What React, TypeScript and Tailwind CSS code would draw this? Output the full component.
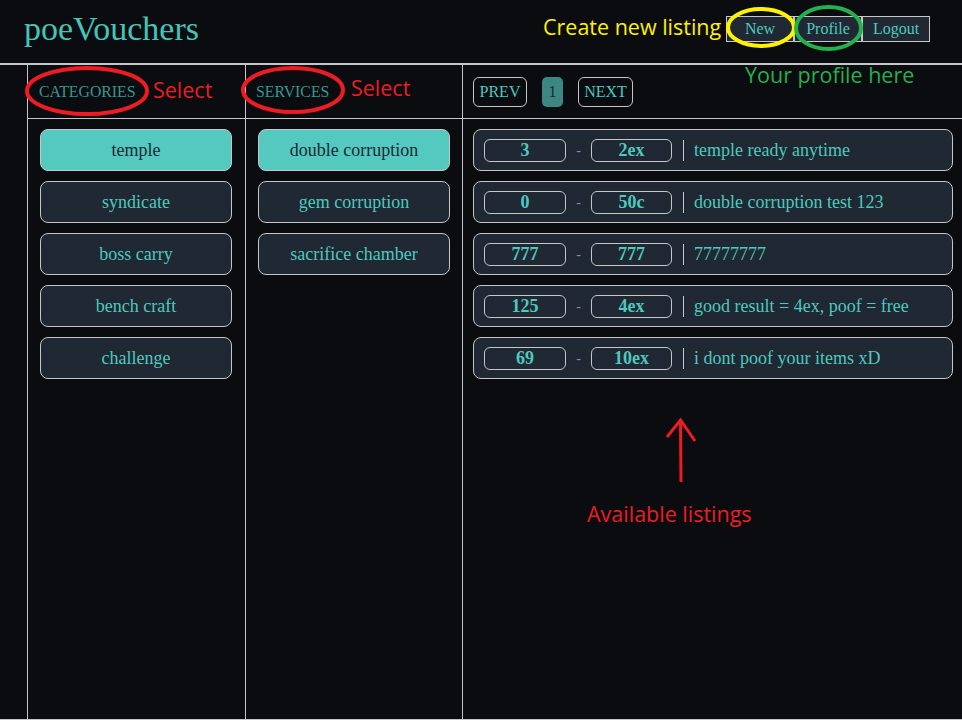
import { useState } from "react"

const CATEGORIES = ["temple", "syndicate", "boss carry", "bench craft", "challenge"]
const SERVICES = ["double corruption", "gem corruption", "sacrifice chamber"]

const LISTINGS = [
  { min: "3", max: "2ex", text: "temple ready anytime" },
  { min: "0", max: "50c", text: "double corruption test 123" },
  { min: "777", max: "777", text: "77777777" },
  { min: "125", max: "4ex", text: "good result = 4ex, poof = free" },
  { min: "69", max: "10ex", text: "i dont poof your items xD" },
]

const serif = "font-['Liberation_Serif',_'Times_New_Roman',_serif]"

function PickButton({ label, active, onClick }: { label: string; active: boolean; onClick: () => void }) {
  return (
    <button
      onClick={onClick}
      className={
        "w-[192px] h-[42px] rounded-[8px] border border-[#c5c6c7] text-[18px] " +
        (active ? "bg-[#53c9bf] text-[#1f2833]" : "bg-[#1f2833] text-[#4fc8bd]")
      }
    >
      {label}
    </button>
  )
}

// annotations drawn on top of the screenshot (paint marks)
function Annotations() {
  return (
    <div className="pointer-events-none absolute inset-0 font-['Open_Sans',_sans-serif]">
      <svg width="962" height="720" className="absolute inset-0">
        <ellipse cx="87" cy="91" rx="60" ry="23" fill="none" stroke="#ed1c24" strokeWidth="4" />
        <ellipse cx="293" cy="90" rx="50" ry="22" fill="none" stroke="#ed1c24" strokeWidth="4" />
        <ellipse cx="761" cy="27.5" rx="33" ry="18.5" fill="none" stroke="#fff200" strokeWidth="4" />
        <ellipse cx="828.5" cy="28" rx="32.5" ry="21" fill="none" stroke="#22b14c" strokeWidth="4" />
        <path d="M681 482 L680.5 420 M667 437 L680.5 420 L695 441" fill="none" stroke="#ed1c24" strokeWidth="3" />
      </svg>
      <span className="absolute left-[153px] top-[79px] text-[21.5px] leading-none text-[#ed1c24]">Select</span>
      <span className="absolute left-[351px] top-[77px] text-[21.5px] leading-none text-[#ed1c24]">Select</span>
      <span className="absolute left-[543px] top-[16px] text-[21.5px] leading-none text-[#fff200]">Create new listing</span>
      <span className="absolute left-[745px] top-[64px] text-[21.5px] leading-none text-[#22b14c]">Your profile here</span>
      <span className="absolute left-[587px] top-[503px] text-[21.5px] leading-none text-[#ed1c24]">Available listings</span>
    </div>
  )
}

export default function App() {
  const [category, setCategory] = useState("temple")
  const [service, setService] = useState("double corruption")

  return (
    <div className={"relative h-[720px] w-full flex flex-col bg-[#0b0c10] overflow-hidden " + serif}>
      {/* Header */}
      <div className="h-[65px] shrink-0 flex items-center justify-between pl-6 pr-8 pb-[6px] border-b-2 border-[#c5c6c7]">
        <h1 className="text-[34px] text-[#45c4b8] leading-none">poeVouchers</h1>
        <div className="flex">
          {["New", "Profile", "Logout"].map(b => (
            <button
              key={b}
              className="w-[68px] h-[26px] border border-[#c5c6c7] bg-[#1f2833] text-[16px] text-[#4fc8bd] leading-none"
            >
              {b}
            </button>
          ))}
        </div>
      </div>

      {/* Columns */}
      <div className="flex-1 flex border-b border-[#c5c6c7]">
        <div className="w-[28px] shrink-0 border-r border-[#c5c6c7]" />

        <div className="w-[218px] shrink-0 border-r border-[#c5c6c7] flex flex-col">
          <div className="h-[54px] border-b border-[#c5c6c7] flex items-center pl-[11px]">
            <span className="text-[15.8px] text-[#3a958e]">CATEGORIES</span>
          </div>
          <div className="flex flex-col gap-[10px] pt-[10px] pl-3">
            {CATEGORIES.map(c => (
              <PickButton key={c} label={c} active={c === category} onClick={() => setCategory(c)} />
            ))}
          </div>
        </div>

        <div className="w-[217px] shrink-0 border-r border-[#c5c6c7] flex flex-col">
          <div className="h-[54px] border-b border-[#c5c6c7] flex items-center pl-[10px]">
            <span className="text-[15.8px] text-[#3a958e]">SERVICES</span>
          </div>
          <div className="flex flex-col gap-[10px] pt-[10px] pl-3">
            {SERVICES.map(s => (
              <PickButton key={s} label={s} active={s === service} onClick={() => setService(s)} />
            ))}
          </div>
        </div>

        <div className="flex-1 flex flex-col">
          <div className="h-[54px] border-b border-[#c5c6c7] flex items-center gap-[15px] pl-[10px]">
            <button className="w-[54px] h-[30px] rounded-[6px] border border-[#c5c6c7] text-[16px] text-[#4fc8bd]">PREV</button>
            <span className="w-[21px] h-[30px] rounded-[5px] bg-[#3d8782] text-[16px] text-[#1f2833] flex items-center justify-center">1</span>
            <button className="w-[55px] h-[30px] rounded-[6px] border border-[#c5c6c7] text-[16px] text-[#4fc8bd]">NEXT</button>
          </div>
          <div className="flex flex-col gap-[10px] pt-[10px] pl-[10px]">
            {LISTINGS.map((l, i) => (
              <div
                key={i}
                className="w-[480px] h-[42px] rounded-[8px] border border-[#c5c6c7] bg-[#1f2833] flex items-center pl-[10px]"
              >
                <span className="w-[82px] h-[23px] rounded-[6px] border border-[#c5c6c7] flex items-center justify-center text-[18px] font-bold text-[#4fc8bd]">
                  {l.min}
                </span>
                <span className="w-[25px] text-center text-[14px] text-[#8a8f94]">-</span>
                <span className="w-[81px] h-[23px] rounded-[6px] border border-[#c5c6c7] flex items-center justify-center text-[18px] font-bold text-[#4fc8bd]">
                  {l.max}
                </span>
                <span className="ml-[11px] w-px h-[21px] bg-[#c5c6c7]" />
                <span className="ml-[10px] text-[18px] text-[#4fc8bd] whitespace-nowrap">{l.text}</span>
              </div>
            ))}
          </div>
        </div>
      </div>

      <Annotations />
    </div>
  )
}
